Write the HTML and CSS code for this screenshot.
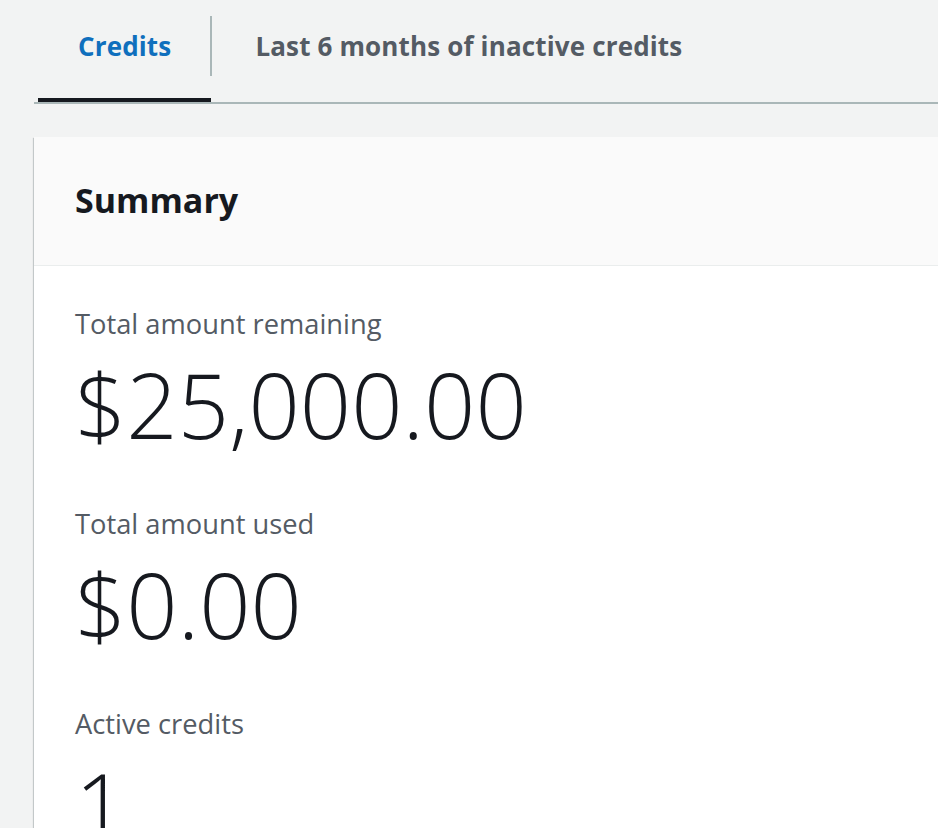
FILE: index.html
```html
<!DOCTYPE html>
<html lang="en">
<head>
  <meta charset="UTF-8" />
  <meta name="viewport" content="width=device-width, initial-scale=1.0"/>
  <title>Credits</title>
  <link rel="stylesheet" href="styles.css">
</head>
<body>

<!-- Tabs -->
<div class="tabs">
  <div class="tab active">Credits</div>
  <div class="tab">Last 6 months of inactive credits</div>
</div>

<!-- Summary card -->
<div class="card">
  <div class="cardHeader">
    <h2>Summary</h2>
  </div>
  <div class="cardBody">
    <div class="stat">
      <div class="label">Total amount remaining</div>
      <div class="value">$25,000.00</div>
    </div>
    <div class="stat">
      <div class="label">Total amount used</div>
      <div class="value">$0.00</div>
    </div>
    <div class="stat">
      <div class="label">Active credits</div>
      <div class="value">1</div>
    </div>
  </div>
</div>

</body>
</html>
```

FILE: styles.css
```css
* { box-sizing: border-box; }

body {
  margin: 0;
  font-family: "Open Sans", sans-serif;
  background: #f2f3f3;
  color: #16191f;
  overflow: hidden;
}

.tabs {
  display: flex;
  margin-left: 34px;
  padding-left: 4px;
  border-bottom: 2px solid #aab7b8;
}

.tab {
  position: relative;
  height: 102px;
  display: flex;
  align-items: center;
  padding: 0 44px 10px 44px;
  font-size: 26px;
  font-weight: 700;
  letter-spacing: 0.15px;
  color: #545b64;
}

.tab.active {
  padding-left: 40px;
  padding-right: 40px;
  color: #0f6fbd;
  border-bottom: 4px solid #16191f;
  padding-bottom: 6px;
}

/* separator between tabs */
.tab.active::after {
  content: "";
  position: absolute;
  right: -1px;
  top: 16px;
  height: 60px;
  width: 2px;
  background: #aab7b8;
}

.card {
  margin: 33px 0 0 34px;
  background: #fff;
  box-shadow: 0 1px 1px 0 rgba(0,28,36,0.3), 1px 1px 1px 0 rgba(0,28,36,0.15), -1px 1px 1px 0 rgba(0,28,36,0.15);
}

.cardHeader {
  height: 129px;
  display: flex;
  align-items: center;
  padding: 0 41px;
  background: #fafafa;
  border-bottom: 1px solid #eaeded;
}

.cardHeader h2 {
  margin: 0 0 2px;
  font-size: 34px;
  font-weight: 700;
}

.cardBody {
  padding: 38px 41px;
}

.stat {
  margin-bottom: 40px;
}

.label {
  font-size: 27.3px;
  color: #545b64;
  line-height: 40px;
}

.value {
  font-size: 90px;
  font-weight: 300;
  line-height: 120px;
}
```
